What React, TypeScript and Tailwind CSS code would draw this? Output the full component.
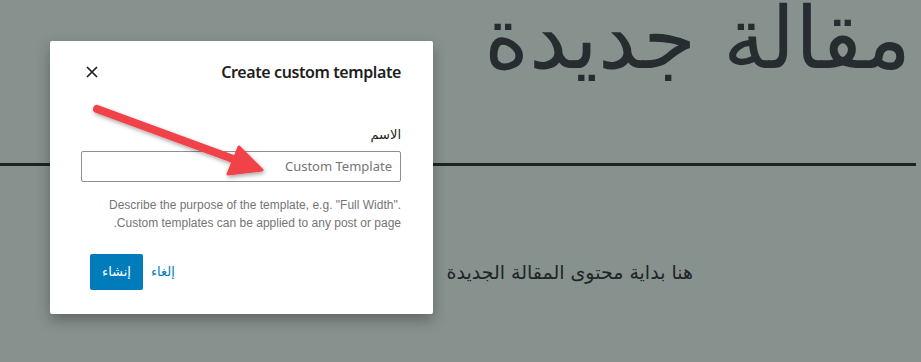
export default function App() {
  return (
    <div
      dir="rtl"
      className="relative w-[921px] h-[362px] overflow-hidden bg-[#87928e] font-['Noto_Sans','DejaVu_Sans',sans-serif]"
    >
      {/* editor canvas behind the dialog (dimmed) */}
      <div className="pr-[10px]">
        <h1 className="mt-[-22px] text-[86px] leading-[120px] font-extralight text-[#262c2f] font-['DejaVu_Sans',sans-serif]">
          مقالة جديدة
        </h1>
        <div className="mt-[65px] mr-[-5px] h-[3px] bg-[#1d2226]" />
        <p className="mt-[92px] mr-[218px] text-[19px] leading-[28px] text-[#1f2427] font-['DejaVu_Sans',sans-serif]">
          هنا بداية محتوى المقالة الجديدة
        </p>
      </div>

      {/* modal */}
      <div className="absolute left-[50px] top-[41px] w-[383px] h-[273px] bg-white rounded-[2px] shadow-[0_6px_14px_rgba(0,0,0,0.3)]">
        <div className="flex items-center justify-between pr-[32px] pl-[30px] pt-[10px] h-[52px]">
          <h2 className="text-[16px] font-semibold text-[#1e1e1e] leading-[24px] tracking-[-0.4px]" dir="ltr">
            Create custom template
          </h2>
          <button className="w-[24px] h-[24px] flex items-center justify-center text-[#1e1e1e]">
            <svg width="14" height="14" viewBox="0 0 14 14" fill="none" stroke="currentColor" strokeWidth="1.7">
              <path d="M2 2 L12 12 M12 2 L2 12" />
            </svg>
          </button>
        </div>

        <div className="px-[32px] pt-[32px]">
          <label className="block text-[13px] leading-[20px] text-[#1e1e1e] font-['DejaVu_Sans',sans-serif]">الاسم</label>
          <div className="mt-[6px] h-[31px] w-[320px] border border-[#8c8f94] rounded-[2px] flex items-center pr-[8px] text-[13px] text-[#757575]">
            <span dir="ltr">Custom Template</span>
          </div>
          <p className="mt-[14px] text-[12px] leading-[18px] text-[#757575] font-['Liberation_Sans',sans-serif]">
            Describe the purpose of the template, e.g. "Full Width". Custom templates can be applied to any post or page.
          </p>
        </div>

        <div className="flex items-center justify-end gap-[8px] pl-[40px] pt-[22px] font-['DejaVu_Sans',sans-serif]">
          <button className="text-[13px] text-[#007cba]">إلغاء</button>
          <button className="h-[36px] w-[53px] rounded-[2px] bg-[#007cba] text-white text-[13px]">إنشاء</button>
        </div>
      </div>

      {/* annotation arrow */}
      <svg className="absolute left-0 top-0 pointer-events-none" width="921" height="362">
        <defs>
          <filter id="sh" x="-20%" y="-20%" width="140%" height="140%">
            <feDropShadow dx="1" dy="2" stdDeviation="2" floodColor="#000" floodOpacity="0.35" />
          </filter>
        </defs>
        <g filter="url(#sh)" fill="#f2434a" stroke="#f2434a" strokeLinejoin="round">
          <path d="M97 109 L236 160" strokeWidth="8" strokeLinecap="round" fill="none" />
          <path d="M239 147 L262 170 L228 174 Z" strokeWidth="3" />
        </g>
      </svg>
    </div>
  );
}
